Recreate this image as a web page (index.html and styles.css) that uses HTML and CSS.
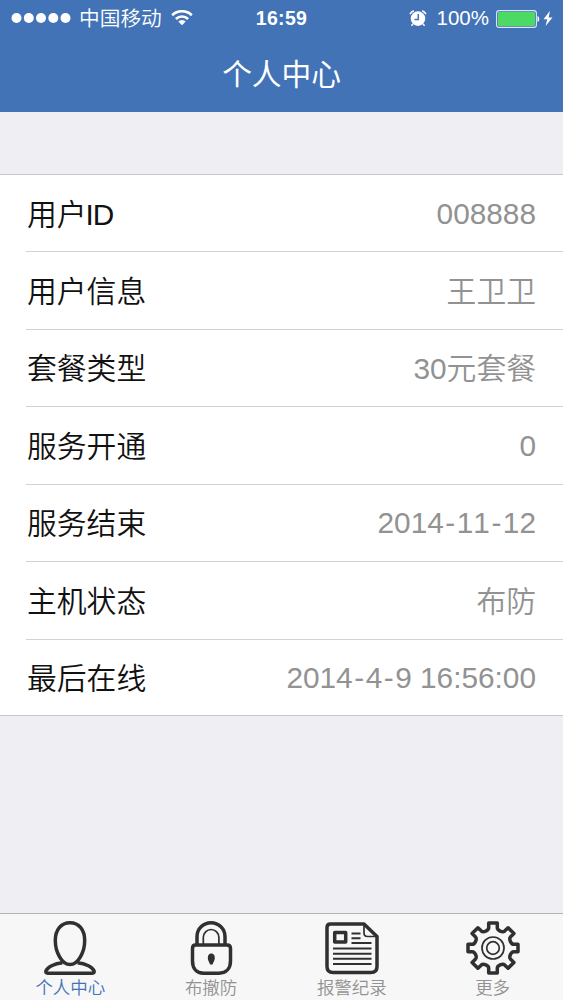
FILE: index.html
```
<!DOCTYPE html>
<html lang="zh-CN">
<head>
<meta charset="utf-8">
<title>个人中心</title>
<link rel="stylesheet" href="styles.css">
</head>
<body>
<div class="screen">
  <header class="header">
    <div class="status">
      <div class="status-left">
        <svg class="signal" width="60" height="12" viewBox="0 0 60 12" fill="#fff"><circle cx="5.5" cy="5" r="5"/><circle cx="17.8" cy="5" r="5"/><circle cx="30" cy="5" r="5"/><circle cx="42.3" cy="5" r="5"/><circle cx="54.5" cy="5" r="5"/></svg>
        <span class="carrier">中国移动</span>
        <svg class="wifi" width="22" height="17" viewBox="0 0 22 17" fill="none" stroke="#fff" stroke-width="2.6"><path d="M1.2 5.200a14 14 0 0 1 19.6 0"/><path d="M4.9 9a8.7 8.7 0 0 1 12.2 0"/><path d="M11 15.300 7.3 11.500a5.3 5.3 0 0 1 7.4 0z" fill="#fff" stroke="none"/></svg>
      </div>
      <span class="time">16:59</span>
      <div class="status-right">
        <svg width="18" height="18" viewBox="0 0 18 18"><circle cx="9" cy="8.600" r="7.3" fill="#fff"/><path d="M1 4.2A7 7 0 0 1 4.8 .8M13.2 .8A7 7 0 0 1 17 4.2M4 14l-1.600 1.800M14 14l1.600 1.800" fill="none" stroke="#fff" stroke-width="1.5"/><path d="M9.3 4v5.400H5.5" fill="none" stroke="#4273b6" stroke-width="1.5"/></svg>
        <span class="percent">100%</span>
        <svg class="battery" width="44" height="18" viewBox="0 0 44 18"><rect x=".6" y=".6" width="39.8" height="16.8" rx="2.5" fill="none" stroke="#dce8f5" stroke-width="1.1"/><rect x="2" y="2" width="37" height="14" rx="1" fill="#4cd964"/><path d="M41.500 6c2.3.6 2.3 5.400 0 6z" fill="#fff"/></svg>
        <svg width="10" height="17" viewBox="0 0 10 17"><path d="M7 .8.5 9.200h3.7L2.6 16 9.500 7.400H5.6z" fill="#fff"/></svg>
      </div>
    </div>
    <h1 class="title">个人中心</h1>
  </header>
  <main class="list">
    <div class="row"><span class="label">用户<span class="latin">ID</span></span><span class="value digits">008888</span></div>
    <div class="row"><span class="label">用户信息</span><span class="value">王卫卫</span></div>
    <div class="row"><span class="label">套餐类型</span><span class="value">30元套餐</span></div>
    <div class="row"><span class="label">服务开通</span><span class="value digits">0</span></div>
    <div class="row"><span class="label">服务结束</span><span class="value digits">2014<span class="dash">-</span>11<span class="dash">-</span>12</span></div>
    <div class="row"><span class="label">主机状态</span><span class="value">布防</span></div>
    <div class="row"><span class="label">最后在线</span><span class="value digits">2014<span class="dash">-</span>4<span class="dash">-</span>9 16:56:00</span></div>
  </main>
  <nav class="tabs">
    <div class="tab active">
      <svg class="icon" viewBox="0 0 54 54"><path d="M19.500 41.800C11 42.500 4.500 46.300 3 49.700c-.6 1.600.1 2.500 1.700 2.500h44.600c1.600 0 2.300-.9 1.700-2.500C49.500 46.300 43 42.500 34.500 41.800"/><path d="M27 1.800c9 0 14.700 7.200 14.700 17.700C41.700 31 35.200 43.600 27 43.600S12.300 31 12.300 19.500C12.300 9 18 1.800 27 1.800z"/></svg>
      <span>个人中心</span>
    </div>
    <div class="tab">
      <svg class="icon" viewBox="0 0 54 54"><path d="M13 24V15.500a14 13.700 0 0 1 28 0V24"/><path class="thin" d="M19.300 24v-7.500a7.800 8 0 0 1 15.600 0V24"/><path d="M11.500 24h31.500c2.500 0 3.500 1.200 3.500 3.500V40c0 7.500-4.500 12.200-11.500 12.200H19.500C12.500 52.200 8.500 47.500 8.500 40V27.500c0-2.300.8-3.500 3-3.500z"/><path class="solid" d="M27.300 32.500a3.500 4.600 0 0 1 3.500 4.600c0 2.500-1.500 4.300-2.200 6.400h-2.600c-.7-2.100-2.200-3.900-2.200-6.400a3.500 4.600 0 0 1 3.500-4.600z"/></svg>
      <span>布撤防</span>
    </div>
    <div class="tab">
      <svg class="icon" viewBox="0 0 54 54"><path d="M5.500 3h33.500l13 12.500v30c0 4-2 6-6 6H8c-4 0-6-2-6-6v-39C2 4 3 3 5.500 3z"/><path class="thin" d="M39 3v9c0 2.600 1 3.500 3.500 3.500H52"/><path d="M9.700 11.500h11v9.600h-11z"/><path class="line" d="M26.500 12.500h9M26.500 17.300h9M26.500 22h20M8 27.500h38.500M8 32.700h38.500M8 37.800h38.500M8 43h38.500"/></svg>
      <span>报警纪录</span>
    </div>
    <div class="tab">
      <svg class="icon" viewBox="0 0 54 54"><path d="M22.700 2h8.600v4.800c0 2.600 5.300 5 7.300 3.300l3.500-3.300 5.800 5.800-3.500 3.500c-1.700 2 .7 7.200 3.300 7.200H52v7.400h-4.300c-2.600 0-5 5.200-3.300 7.200l3.500 3.500-5.800 5.800-3.500-3.300c-2-1.700-7.300.7-7.300 3.300V52h-8.600v-4.800c0-2.600-5.300-5-7.300-3.300l-3.500 3.300-5.800-5.800 3.500-3.500c1.700-2-.7-7.200-3.300-7.200H2v-7.400h4.300c2.600 0 5-5.200 3.300-7.200l-3.500-3.500 5.800-5.800 3.500 3.300c2 1.700 7.300-.7 7.300-3.300z"/><circle class="thin" cx="27" cy="27" r="11"/><circle class="thin" cx="27" cy="27" r="6.300"/></svg>
      <span>更多</span>
    </div>
  </nav>
</div>
</body>
</html>
```
FILE: styles.css
```
* { box-sizing: border-box; }
body { margin: 0; font-family: "Liberation Sans", "Noto Sans CJK SC", sans-serif; font-weight: 350; font-kerning: none; }
svg { display: block; flex: none; }
.screen { width: 563px; height: 1000px; background: #efeef3; display: flex; flex-direction: column; }
.header { height: 112px; background: #4273b6; color: #fff; }
.status { height: 37px; padding: 0 10px 0 11px; display: grid; grid-template-columns: 1fr auto 1fr; align-items: center; font-size: 20px; line-height: 36px; }
.status-left, .status-right { display: flex; align-items: center; height: 36px; }
.status-right { justify-content: flex-end; }
.carrier { font-size: 20.700px; margin: 0 9px 0 8px; }
.time { font-weight: 700; font-size: 19.500px; letter-spacing: .3px; padding-bottom: 1px; margin-right: 1px; }
.percent { margin: 0 7px 0 10px; font-size: 20.500px; padding-bottom: 1px; }
.battery { margin-right: 3px; }
.title { margin: 0; text-align: center; font-size: 29.700px; line-height: 76px; font-weight: 400; }
.list { margin-top: 62px; background: #fff; border-top: 1px solid #c8c7cc; border-bottom: 1px solid #c8c7cc; height: 542px; display: grid; grid-template-rows: 77px repeat(5, 77.500px) 1fr; padding-left: 26px; font-size: 29.800px; line-height: 40px; }
.row { display: flex; justify-content: space-between; align-items: center; padding: 3px 27px 0 1px; border-bottom: 1px solid #d2d1d5; }
.row:last-child { border-bottom: 0; }
.label { color: #111; }
.latin { letter-spacing: -1.200px; margin-left: -1px; }
.value { color: #929292; }
.digits { padding-bottom: 2px; }
.dash { margin: 0 1.500px; }
.tabs { margin-top: auto; height: 87.500px; border-top: 1px solid #b4b4b6; background: #f7f7f8; display: grid; grid-template-columns: repeat(4, 1fr); }
.tab { display: flex; flex-direction: column; align-items: center; padding-top: 7px; font-size: 17.500px; line-height: 26px; color: #929292; }
.active { color: #4273b6; }
.icon { width: 54px; height: 54px; fill: none; stroke: #303030; stroke-width: 3.500; stroke-linejoin: round; }
.icon .thin { stroke-width: 1.700; }
.icon .line { stroke-width: 2; }
.icon .solid { fill: #303030; stroke: none; }
```
